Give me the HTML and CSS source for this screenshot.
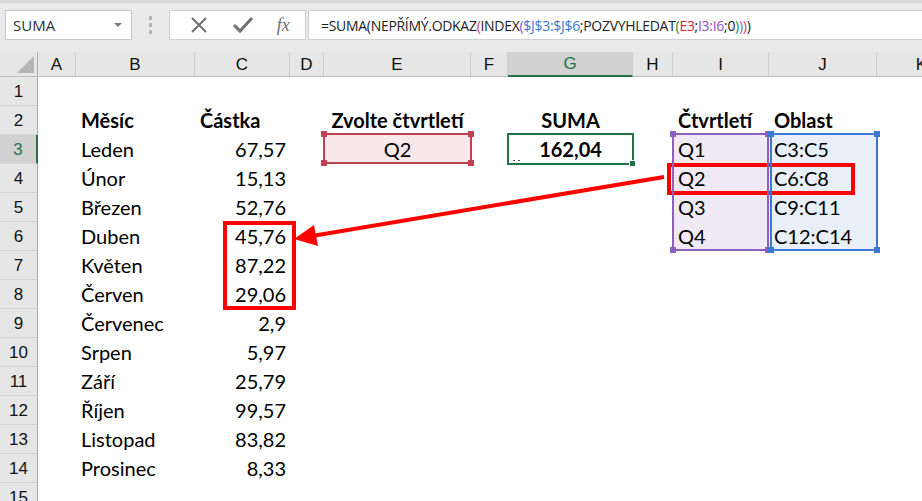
FILE: index.html
```html
<!DOCTYPE html>
<html lang="cs">
<head>
<meta charset="utf-8">
<title>Excel – NEPŘÍMÝ.ODKAZ</title>
<link rel="stylesheet" href="styles.css">
</head>
<body>
<div class="app">
  <div class="toolbar">
    <div class="namebox"><span class="nb-text">SUMA</span><span class="nb-arrow"></span></div>
    <div class="grip"><i></i><i></i><i></i></div>
    <div class="btns">
      <svg class="ico" width="20" height="20" viewBox="0 0 20 20"><path d="M3 3 L17 17 M17 3 L3 17" stroke="#707070" stroke-width="2" fill="none"/></svg>
      <svg class="ico" width="22" height="20" viewBox="0 0 22 20"><path d="M2 10 L8 16 L20 3" stroke="#707070" stroke-width="3" fill="none"/></svg>
      <span class="fx">fx</span>
    </div>
    <div class="formula">=SUMA(NEPŘÍMÝ.ODKAZ<span class="p1">(</span>INDEX<span class="p2">(</span><span class="rb">$J$3:$J$6</span>;POZVYHLEDAT<span class="p3">(</span><span class="rr">E3</span>;<span class="rp">I3:I6</span>;0<span class="p3">)</span><span class="p2">)</span><span class="p1">)</span>)</div>
  </div>

  <div class="stack">
    <div class="sheet">
      <div class="hd corner"><span class="tri"></span></div>
      <div class="hd">A</div><div class="hd">B</div><div class="hd">C</div><div class="hd">D</div>
      <div class="hd">E</div><div class="hd">F</div><div class="hd sel">G</div><div class="hd">H</div>
      <div class="hd">I</div><div class="hd">J</div><div class="hd">K</div>

      <div class="rh">1</div>
      <div class="rh">2</div><div class="c cB b">Měsíc</div><div class="c cC b">Částka</div><div class="c cE b ctr">Zvolte čtvrtletí</div><div class="c cG b ctr">SUMA</div><div class="c cI b">Čtvrtletí</div><div class="c cJ b">Oblast</div>
      <div class="rh sel">3</div><div class="c cB">Leden</div><div class="c cC num">67,57</div><div class="c cE ctr fill-red">Q2</div><div class="c cG b ctr">162,04</div><div class="c cI fill-purple">Q1</div><div class="c cJ fill-blue">C3:C5</div>
      <div class="rh">4</div><div class="c cB">Únor</div><div class="c cC num">15,13</div><div class="c cI fill-purple">Q2</div><div class="c cJ fill-blue">C6:C8</div>
      <div class="rh">5</div><div class="c cB">Březen</div><div class="c cC num">52,76</div><div class="c cI fill-purple">Q3</div><div class="c cJ fill-blue">C9:C11</div>
      <div class="rh">6</div><div class="c cB">Duben</div><div class="c cC num">45,76</div><div class="c cI fill-purple">Q4</div><div class="c cJ fill-blue">C12:C14</div>
      <div class="rh">7</div><div class="c cB">Květen</div><div class="c cC num">87,22</div>
      <div class="rh">8</div><div class="c cB">Červen</div><div class="c cC num">29,06</div>
      <div class="rh">9</div><div class="c cB">Červenec</div><div class="c cC num">2,9</div>
      <div class="rh">10</div><div class="c cB">Srpen</div><div class="c cC num">5,97</div>
      <div class="rh">11</div><div class="c cB">Září</div><div class="c cC num">25,79</div>
      <div class="rh">12</div><div class="c cB">Říjen</div><div class="c cC num">99,57</div>
      <div class="rh">13</div><div class="c cB">Listopad</div><div class="c cC num">83,82</div>
      <div class="rh">14</div><div class="c cB">Prosinec</div><div class="c cC num">8,33</div>
      <div class="rh">15</div>
    </div>

    <div class="overlay">
      <div class="rng rng-red"><i class="h tl"></i><i class="h tr"></i><i class="h bl"></i><i class="h br"></i></div>
      <div class="rng rng-green"><i class="dots"></i><i class="fill-handle"></i></div>
      <div class="rng rng-purple"><i class="h tl"></i><i class="h tr"></i><i class="h bl"></i><i class="h br"></i></div>
      <div class="rng rng-blue"><i class="h tl"></i><i class="h tr"></i><i class="h bl"></i><i class="h br"></i></div>
    </div>

    <svg class="ann" width="922" height="449" viewBox="0 52 922 449">
      <rect x="669" y="165" width="184" height="28" fill="none" stroke="#ff0000" stroke-width="4"/>
      <rect x="225" y="223" width="69" height="85" fill="none" stroke="#ff0000" stroke-width="4"/>
      <line x1="664" y1="177" x2="312" y2="236" stroke="#ff0000" stroke-width="4"/>
      <polygon points="294,239 314,225 318,246" fill="#ff0000"/>
    </svg>
  </div>
</div>
</body>
</html>
```
FILE: styles.css
```css
html, body {
  margin: 0;
  padding: 0;
  background: #ffffff;
  overflow: hidden;
}
.app {
  width: 922px;
  height: 501px;
  overflow: hidden;
  font-family: "Lato", "Noto Sans", sans-serif;
}

/* ---------- formula bar ---------- */
.toolbar {
  height: 52px;
  box-sizing: border-box;
  background: #e9e9e9;
  border-top: 3px solid #d9d9d9;
  display: flex;
  align-items: flex-start;
  padding-top: 7px;
  padding-left: 5px;
}
.namebox {
  width: 127px;
  height: 30px;
  box-sizing: border-box;
  background: #fff;
  border: 1px solid #c8c8c8;
  display: flex;
  align-items: center;
  justify-content: space-between;
  padding: 0 9px 0 7px;
  font-family: "Open Sans", "Noto Sans", sans-serif;
  font-size: 15px;
  color: #333;
}
.nb-arrow {
  width: 0;
  height: 0;
  border-left: 4px solid transparent;
  border-right: 4px solid transparent;
  border-top: 4px solid #7a7a7a;
}
.grip {
  width: 37px;
  height: 30px;
  display: flex;
  flex-direction: column;
  align-items: center;
  justify-content: center;
  gap: 3px;
}
.grip i {
  display: block;
  width: 3px;
  height: 4px;
  background: #b3b3b3;
}
.btns {
  width: 137px;
  height: 30px;
  box-sizing: border-box;
  background: #fff;
  border: 1px solid #d0d0d0;
  display: flex;
  align-items: center;
  justify-content: space-around;
  padding: 0 4px 0 8px;
}
.fx {
  font-family: "Liberation Serif", serif;
  font-style: italic;
  font-size: 18px;
  color: #707070;
}
.formula {
  flex: 1;
  margin-left: 2px;
  height: 30px;
  box-sizing: border-box;
  background: #fff;
  border: 1px solid #d0d0d0;
  border-right: none;
  display: flex;
  align-items: center;
  padding-left: 12px;
  font-family: "Open Sans", "Noto Sans", sans-serif;
  font-size: 14px;
  letter-spacing: -0.3px;
  color: #222;
  white-space: pre;
}
.p1 { color: #d43c87; }
.p2 { color: #7b67d1; }
.p3 { color: #178a3c; }
.rb { color: #3b78d6; }
.rr { color: #d2263a; }
.rp { color: #8a55c0; }

/* ---------- sheet ---------- */
.stack {
  display: grid;
}
.stack > * {
  grid-area: 1 / 1;
}
.sheet, .overlay {
  display: grid;
  grid-template-columns: 38px 38px 119px 95px 34px 147px 37px 125px 40px 96px 108px 90px;
  grid-template-rows: 25px repeat(15, 29px);
}
.overlay { pointer-events: none; }
.ann { pointer-events: none; }

.hd {
  background: #e6e6e6;
  border-right: 1px solid #cdcdcd;
  border-bottom: 1px solid #bdbdbd;
  box-sizing: border-box;
  display: flex;
  align-items: center;
  justify-content: center;
  font-family: "Liberation Sans", Arial, sans-serif;
  font-size: 17px;
  color: #111;
  padding-top: 1px;
}
.hd.corner {
  border-right: 1px solid #ababab;
  position: relative;
}
.tri {
  position: absolute;
  right: 3px;
  bottom: 3px;
  width: 0;
  height: 0;
  border-left: 17px solid transparent;
  border-bottom: 17px solid #b5b5b5;
}
.hd.sel {
  background: #d2d2d2;
  color: #217346;
  border-bottom: 2px solid #217346;
}
.rh {
  grid-column: 1;
  background: #e6e6e6;
  border-right: 1px solid #ababab;
  border-bottom: 1px solid #d4d4d4;
  box-sizing: border-box;
  display: flex;
  align-items: center;
  justify-content: center;
  font-family: "Liberation Sans", Arial, sans-serif;
  font-size: 17px;
  color: #111;
  padding-top: 1px;
}
.rh.sel {
  background: #d2d2d2;
  color: #217346;
  border-right: 2px solid #217346;
}

.c {
  display: flex;
  align-items: center;
  padding: 0 5px 2px;
  box-sizing: border-box;
  font-size: 20px;
  color: #000;
  white-space: nowrap;
  overflow: visible;
}
.cB { grid-column: 3; }
.cC { grid-column: 4; }
.cE { grid-column: 6; }
.cG { grid-column: 8; }
.cI { grid-column: 10; }
.cJ { grid-column: 11; }
.b { font-weight: 700; }
.num { justify-content: flex-end; padding-right: 4px; }
.ctr { justify-content: center; }
.fill-red { background: #f9e8ea; }
.fill-purple { background: #efeaf6; }
.fill-blue { background: #e8eff9; }

/* range highlights */
.rng {
  position: relative;
  margin: -2px -1px 0 -1px;
  border: 2px solid;
}
.rng-red { grid-column: 6; grid-row: 4; border-color: #c0414f; }
.rng-green { grid-column: 8; grid-row: 4; border-color: #217346; margin-bottom: -1px; }
.rng-purple { grid-column: 10; grid-row: 4 / 8; border-color: #8c5fc0; margin-right: 0; }
.rng-blue { grid-column: 11; grid-row: 4 / 8; border-color: #3c78d4; margin-left: 1px; }
.h {
  position: absolute;
  width: 6px;
  height: 6px;
}
.rng-red .h { background: #c0414f; }
.rng-purple .h { background: #8c5fc0; }
.rng-blue .h { background: #3c78d4; }
.h.tl { left: -4px; top: -4px; }
.h.tr { right: -4px; top: -4px; }
.h.bl { left: -4px; bottom: -4px; }
.h.br { right: -4px; bottom: -4px; }
.fill-handle {
  position: absolute;
  right: -4px;
  bottom: -4px;
  width: 5px;
  height: 5px;
  background: #217346;
  border: 1px solid #fff;
}
.dots {
  position: absolute;
  left: 4px;
  bottom: 2px;
  width: 8px;
  height: 1px;
  background: linear-gradient(to right, #555 0 2px, transparent 2px 5px, #555 5px 7px, transparent 7px);
}
```
